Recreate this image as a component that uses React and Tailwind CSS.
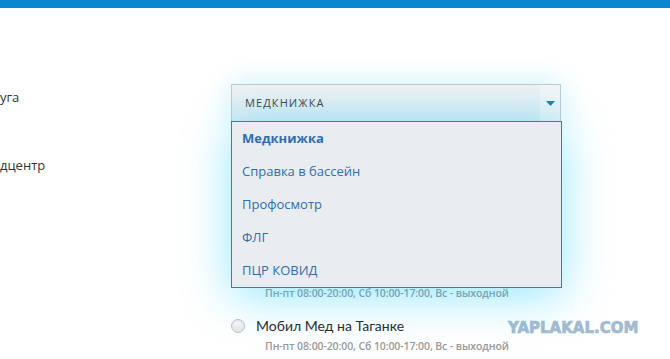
import React from 'react';

const services = ['Медкнижка', 'Справка в бассейн', 'Профосмотр', 'ФЛГ', 'ПЦР КОВИД'];

const hours = 'Пн-пт 08:00-20:00, Сб 10:00-17:00, Вс - выходной';

export default function App() {
  return (
    <div className="relative w-[670px] h-[359px] overflow-hidden bg-white font-['Open_Sans',sans-serif] text-[#333]">
      {/* top bar */}
      <div className="h-2 bg-[#0b87cf]" />

      <div className="flex pt-[76px]">
        {/* labels */}
        <div className="w-[231px] shrink-0 flex flex-col text-[13px]">
          <div className="h-[27px] flex items-center">уга</div>
          <div className="mt-[45px]">дцентр</div>
        </div>

        {/* fields */}
        <div className="w-[330px] relative">
          {/* select + open list */}
          <div className="relative">
            <div className="flex h-[37px] border border-[#c4c9cd] border-b-0 bg-gradient-to-b from-[#f0f2f3] to-[#d5e9f1] shadow-[0_0_30px_rgba(0,190,255,0.22)]">
              <div className="flex-1 flex items-center pl-[13px] text-[11px] tracking-[0.1em] text-[#444]">
                МЕДКНИЖКА
              </div>
              <div className="w-[20px] flex items-center justify-center bg-white/30">
                <svg width="9" height="5" viewBox="0 0 9 5">
                  <path d="M0 0h9L4.5 5z" fill="#1a7fb4" />
                </svg>
              </div>
            </div>
            <div className="absolute left-0 top-[37px] w-[331px] h-[167px] border border-[#2f84ab] bg-[#e9edf0] flex flex-col pl-[10px] z-10 shadow-[0_8px_45px_rgba(0,200,255,0.42)]">
              {services.map((s, i) => (
                <div
                  key={s}
                  className={`h-[33px] flex items-center text-[13px] text-[#2d6db3] ${i === 0 ? 'font-bold' : ''}`}
                >
                  {s}
                </div>
              ))}
            </div>
          </div>

          {/* clinic list (upper entries are hidden under the open list) */}
          <div className="flex flex-col pt-[165px]">
            <div className="pl-[34px] text-[10.5px] font-semibold text-[#9a9a9a] tracking-[-0.01em]">
              {hours}
            </div>
            <div className="flex flex-col mt-[14px]">
              <div className="flex items-center gap-[11px] h-[20px]">
                <span className="w-[14px] h-[14px] rounded-full border border-[#bfc3c6] bg-gradient-to-b from-[#fafafa] to-[#e4e6e8] shadow-[inset_0_1px_1px_rgba(0,0,0,0.08)]" />
                <span className="font-['Lato',sans-serif] text-[14px] text-[#2a2a2a]">Мобил Мед на Таганке</span>
              </div>
              <div className="pl-[34px] mt-[3px] text-[10.5px] font-semibold text-[#9a9a9a] tracking-[-0.01em]">
                {hours}
              </div>
            </div>
          </div>
        </div>
      </div>

      {/* watermark */}
      <div className="absolute left-[508px] top-[321px] font-['DejaVu_Sans',sans-serif] font-bold text-[15px] leading-none text-[#a3bbd0] [-webkit-text-stroke:0.7px_#a3bbd0]">
        YAPLAKAL.COM
      </div>
    </div>
  );
}
